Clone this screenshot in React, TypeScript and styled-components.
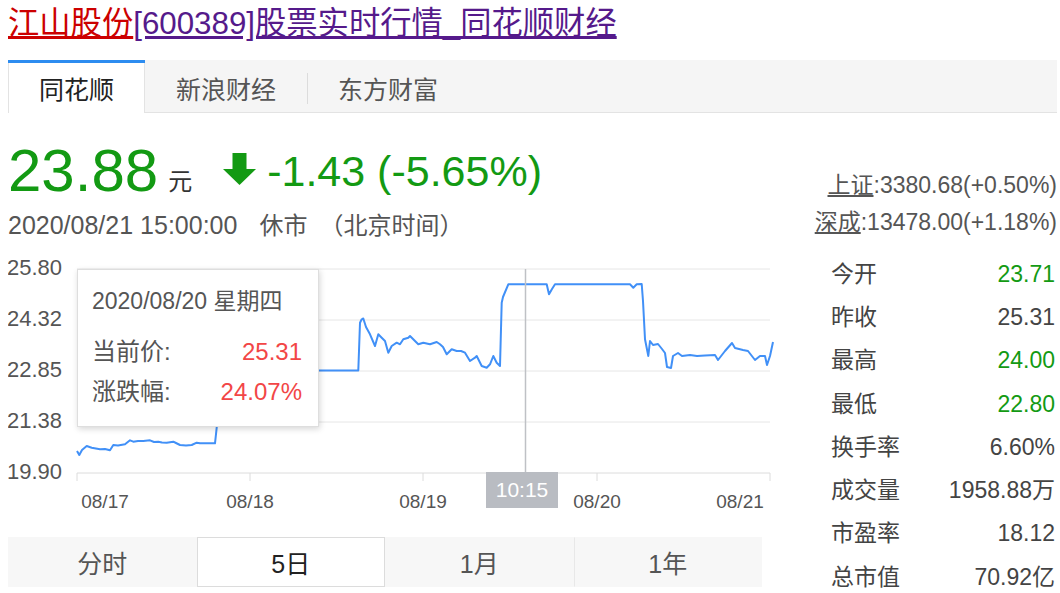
import React from 'react'
import styled, { createGlobalStyle } from 'styled-components'

const GlobalStyle = createGlobalStyle`
  html, body {
    margin: 0;
    padding: 0;
    background: #fff;
    overflow: hidden;
  }
  body {
    font-family: "Liberation Sans", "Noto Sans CJK SC", sans-serif;
    color: #555;
  }
`

const GREEN = '#139a13'
const RED = '#f24646'

const Page = styled.div`
  width: 1049px;
  padding: 0 3px 0 8px;
`

const Title = styled.h1`
  margin: 4px 0 16px;
  font-size: 31.3px;
  font-weight: normal;
  line-height: 40px;
  white-space: nowrap;
`

const TitleLink = styled.a<{ $color: string }>`
  color: ${p => p.$color};
  text-decoration: underline;
`

const SourceTabs = styled.div`
  display: flex;
  align-items: flex-start;
  height: 53px;
  box-sizing: border-box;
  background: #f5f5f5;
  border-bottom: 1px solid #e3e3e3;
`

const SourceTab = styled.div<{ $active?: boolean; $sep?: boolean }>`
  position: relative;
  box-sizing: border-box;
  height: ${p => (p.$active ? '53px' : '52px')};
  padding: 0 31px;
  display: flex;
  align-items: center;
  font-size: 25px;
  color: ${p => (p.$active ? '#222' : '#555')};
  background: ${p => (p.$active ? '#fff' : 'transparent')};
  border-top: 3px solid ${p => (p.$active ? '#2d8cf0' : 'transparent')};
  box-shadow: ${p => (p.$active ? 'inset 1px 0 #e3e3e3, inset -1px 0 #e3e3e3' : 'none')};

  &::before {
    content: '';
    display: ${p => (p.$sep ? 'block' : 'none')};
    position: absolute;
    left: 0;
    top: 10px;
    height: 31px;
    border-left: 1px solid #dcdcdc;
  }
`

const QuoteHeader = styled.div`
  display: flex;
  justify-content: space-between;
  align-items: flex-end;
  padding-top: 28px;
`

const PriceRow = styled.div`
  display: flex;
  align-items: center;
  height: 60px;
`

const Price = styled.span`
  font-size: 60px;
  line-height: 60px;
  color: ${GREEN};
`

const Unit = styled.span`
  align-self: flex-end;
  margin: 0 0 7px 10px;
  font-size: 24px;
  line-height: 24px;
  color: #333;
`

const Arrow = styled.svg`
  margin: 0 0 5px 31px;
  flex-shrink: 0;
`

const Change = styled.span`
  margin-left: 11px;
  font-size: 43px;
  line-height: 44px;
  color: ${GREEN};
  white-space: nowrap;
`

const DateRow = styled.div`
  margin-top: 9px;
  font-size: 25px;
  line-height: 30px;
  color: #555;
  white-space: nowrap;
`

const DateNote = styled.span<{ $gap: number }>`
  margin-left: ${p => p.$gap}px;
  font-size: 24px;
`

const IndexList = styled.div`
  text-align: right;
  font-size: 23px;
  line-height: 37px;
  color: #555;
  white-space: nowrap;
`

const IndexName = styled.span`
  text-decoration: underline;
`

const ChartSection = styled.div`
  display: flex;
  justify-content: space-between;
  margin-top: 10px;
`

const ChartColumn = styled.div`
  width: 770px;
`

const ChartBox = styled.div`
  position: relative;
  height: 265px;
`

const ChartSvg = styled.svg`
  display: block;

  text {
    font-family: "Liberation Sans", sans-serif;
    fill: #555;
  }
`

const Tooltip = styled.div`
  position: absolute;
  left: 69px;
  top: 18px;
  width: 242px;
  height: 158px;
  box-sizing: border-box;
  padding: 16px 16px 0 14px;
  background: #fff;
  border: 1px solid #dedede;
  box-shadow: 1px 2px 6px rgba(0, 0, 0, 0.16);
`

const TooltipTitle = styled.div`
  margin-bottom: 16px;
  font-size: 23px;
  line-height: 30px;
  color: #555;
`

const TooltipRow = styled.div`
  display: flex;
  justify-content: space-between;
  font-size: 24px;
  line-height: 40px;
  color: #555;
`

const TooltipValue = styled.span`
  color: ${RED};
`

const PeriodTabs = styled.div`
  display: flex;
  width: 754px;
  height: 50px;
  margin-top: 21px;
  background: #f7f7f7;
`

const PeriodTab = styled.div<{ $active?: boolean; $sep?: boolean }>`
  flex: 1;
  display: flex;
  align-items: center;
  justify-content: center;
  box-sizing: border-box;
  font-size: 25px;
  color: ${p => (p.$active ? '#222' : '#555')};
  background: ${p => (p.$active ? '#fff' : 'transparent')};
  border: 1px solid ${p => (p.$active ? '#dcdcdc' : 'transparent')};
  border-left-color: ${p => (p.$active ? '#dcdcdc' : p.$sep ? '#e8e8e8' : 'transparent')};
`

const StatsPanel = styled.div`
  width: 247px;
  box-sizing: border-box;
  padding: 1.5px 2px 0 21px;
`

const StatRow = styled.div`
  display: flex;
  justify-content: space-between;
  align-items: center;
  height: 43.3px;
  font-size: 23px;
  line-height: 1;
  color: #444;
`

const StatValue = styled.span<{ $color?: string }>`
  color: ${p => p.$color || '#444'};
`

// chart drawn in page coordinates (viewBox starts at the box's page offset)
const GRID_Y = [268, 319, 370, 421, 472]
const Y_LABELS = ['25.80', '24.32', '22.85', '21.38', '19.90']
const TICKS_X = [77, 250, 423, 597, 770]
const X_LABELS: [number, string][] = [
  [105, '08/17'],
  [250, '08/18'],
  [423, '08/19'],
  [597, '08/20'],
  [740, '08/21'],
]

const LINE: [number, number][] = [
  [77, 450], [79.3, 454], [82, 449], [86.7, 445], [91.7, 446.7], [100, 448.3], [105, 448],
  [110, 449.3], [113.3, 444], [118, 444.5], [125, 443.3], [130, 439.3], [133.3, 440.7],
  [138, 440], [143.3, 440], [150, 439.3], [154, 441], [158.3, 440.7], [162, 441.5],
  [166.7, 441.7], [173.3, 440.7], [176, 442], [180, 444], [186, 444.5], [191.7, 444],
  [196.7, 441.7], [200, 442.3], [215, 442.3], [216.7, 426.7], [219, 372], [222, 369.5],
  [358.3, 369.5], [360, 321.7], [361.7, 318.3], [363.3, 317.5], [366, 326], [370, 333.3],
  [375, 345], [378.3, 333.3], [381.7, 336.7], [385, 340], [388.3, 351.7], [391.7, 345],
  [396.7, 341.7], [400, 343.3], [403.3, 338.3], [408.3, 336.7], [410, 335], [415, 340],
  [418.3, 343.3], [423.3, 341.7], [430, 343.3], [436.7, 341], [440, 343.3], [443, 346],
  [446.7, 353.3], [451.7, 348.3], [456.7, 350], [461, 350], [465, 351.7], [470, 360],
  [475, 356.7], [476.7, 355], [481.7, 365], [486.7, 366.7], [490, 363.3], [493.3, 355],
  [496.7, 361.7], [500, 365], [501.7, 301.7], [503, 296], [508.3, 283.3], [546.7, 283.3],
  [549, 293.3], [552, 288], [555, 283.3], [630, 283.3], [633.3, 286.7], [636.7, 283.3],
  [641.7, 283], [643, 300], [645, 338.3], [648.3, 355], [650, 340], [653, 344], [658, 343],
  [662, 348], [665, 352], [667, 366], [671, 367], [673, 355], [678, 352], [682, 355],
  [690, 354], [697, 355], [705, 354.5], [715, 354], [718, 359], [725, 350], [732, 342],
  [735, 347], [743, 349], [748, 350], [755, 359], [760, 355], [765, 355], [767, 364],
  [770, 355], [773, 341],
]

const STATS: [string, string, string?][] = [
  ['今开', '23.71', GREEN],
  ['昨收', '25.31'],
  ['最高', '24.00', GREEN],
  ['最低', '22.80', GREEN],
  ['换手率', '6.60%'],
  ['成交量', '1958.88万'],
  ['市盈率', '18.12'],
  ['总市值', '70.92亿'],
]

const SOURCES = ['同花顺', '新浪财经', '东方财富']
const PERIODS = ['分时', '5日', '1月', '1年']

function PriceChart() {
  return (
    <ChartSvg width={770} height={265} viewBox="8 250 770 265">
      {GRID_Y.map((y, i) => (
        <line key={y} x1={77} x2={770} y1={y} y2={y} stroke={i === 4 ? '#dcdcdc' : '#e6e6e6'} strokeWidth={1} />
      ))}
      {TICKS_X.map(x => (
        <line key={x} x1={x} x2={x} y1={472} y2={480} stroke="#dcdcdc" strokeWidth={1} />
      ))}
      {Y_LABELS.map((t, i) => (
        <text key={t} x={62} y={GRID_Y[i] + 6} fontSize={22} textAnchor="end">
          {t}
        </text>
      ))}
      {X_LABELS.map(([x, t]) => (
        <text key={t} x={x} y={507} fontSize={19} textAnchor="middle">
          {t}
        </text>
      ))}
      <polyline
        points={LINE.map(p => p.join(',')).join(' ')}
        fill="none"
        stroke="#4190f7"
        strokeWidth={2}
        strokeLinejoin="round"
      />
      <line x1={525.5} x2={525.5} y1={268} y2={472} stroke="#bfc1c5" strokeWidth={1.5} />
      <rect x={486} y={471} width={72} height={36} fill="#b9bcc2" />
      <text x={522} y={496} fontSize={21} textAnchor="middle" style={{ fill: '#fff' }}>
        10:15
      </text>
    </ChartSvg>
  )
}

export default function App() {
  return (
    <Page>
      <GlobalStyle />
      <Title>
        <TitleLink href="#" $color="#cc0000">江山股份</TitleLink>
        <TitleLink href="#" $color="#551a8b">[600389]股票实时行情_同花顺财经</TitleLink>
      </Title>

      <SourceTabs>
        {SOURCES.map((s, i) => (
          <SourceTab key={s} $active={i === 0} $sep={i > 1}>
            {s}
          </SourceTab>
        ))}
      </SourceTabs>

      <QuoteHeader>
        <div>
          <PriceRow>
            <Price>23.88</Price>
            <Unit>元</Unit>
            <Arrow width={33} height={32} viewBox="0 0 33 32">
              <path d="M9.5 0h14v16h9.5L16.5 32 0 16h9.5z" fill={GREEN} />
            </Arrow>
            <Change>-1.43 (-5.65%)</Change>
          </PriceRow>
          <DateRow>
            2020/08/21 15:00:00
            <DateNote $gap={22}>休市</DateNote>
            <DateNote $gap={12}>（北京时间）</DateNote>
          </DateRow>
        </div>
        <IndexList>
          <div>
            <IndexName>上证</IndexName>:3380.68(+0.50%)
          </div>
          <div>
            <IndexName>深成</IndexName>:13478.00(+1.18%)
          </div>
        </IndexList>
      </QuoteHeader>

      <ChartSection>
        <ChartColumn>
          <ChartBox>
            <PriceChart />
            <Tooltip>
              <TooltipTitle>2020/08/20 星期四</TooltipTitle>
              <TooltipRow>
                <span>当前价:</span>
                <TooltipValue>25.31</TooltipValue>
              </TooltipRow>
              <TooltipRow>
                <span>涨跌幅:</span>
                <TooltipValue>24.07%</TooltipValue>
              </TooltipRow>
            </Tooltip>
          </ChartBox>
          <PeriodTabs>
            {PERIODS.map((p, i) => (
              <PeriodTab key={p} $active={i === 1} $sep={i > 2}>
                {p}
              </PeriodTab>
            ))}
          </PeriodTabs>
        </ChartColumn>

        <StatsPanel>
          {STATS.map(([label, value, color]) => (
            <StatRow key={label}>
              <span>{label}</span>
              <StatValue $color={color}>{value}</StatValue>
            </StatRow>
          ))}
        </StatsPanel>
      </ChartSection>
    </Page>
  )
}
